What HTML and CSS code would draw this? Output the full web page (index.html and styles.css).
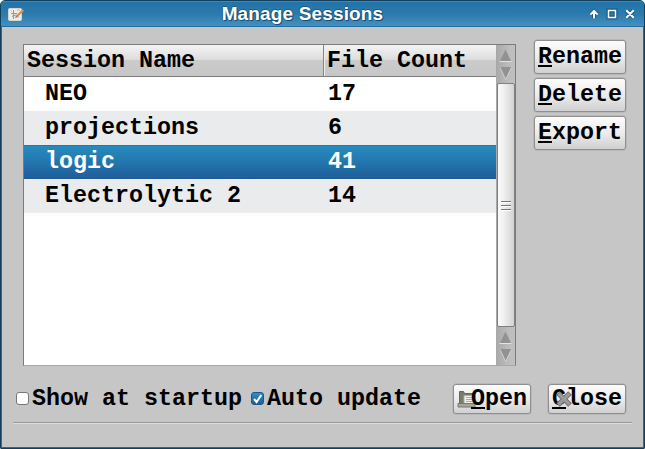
FILE: index.html
```html
<!DOCTYPE html>
<html lang="en">
<head>
<meta charset="utf-8">
<title>Manage Sessions</title>
<link rel="stylesheet" href="styles.css">
</head>
<body>
<div class="window">
  <header class="titlebar">
    <svg class="app-icon" width="18" height="16" viewBox="0 0 18 16">
      <rect x=".5" y="1.500" width="13" height="12" rx="1" fill="#ecece8" stroke="#d4d4cc"/>
      <path d="M5.500 3v9M3 6.500h6M4 9.500q4-3 7 1" fill="none" stroke="#8fa08f" stroke-width="1"/>
      <path d="M9 3h3M3 4h1" stroke="#b9b9b9"/>
      <path d="M8.500 9.500L15.300 3" stroke="#e98b35" stroke-width="2.400"/>
      <path d="M7 11l1-2 1.500 1z" fill="#6a5a4a"/>
    </svg>
    <h1 class="title">Manage Sessions</h1>
    <svg class="controls" width="50" height="14" viewBox="0 0 50 14">
      <g fill="none" stroke="#0f4468" stroke-opacity=".55" stroke-width="4">
        <path d="M6 11V4M2.500 7.500L6 4l3.500 3.500M20.500 3.500h7v7h-7zM38.500 3.500l7 7M45.500 3.500l-7 7"/>
      </g>
      <g fill="none" stroke="#fff" stroke-width="2">
        <path d="M6 11.300V4M2.400 7.600L6 4l3.600 3.600M38.300 3.300l7.400 7.400M45.700 3.300l-7.400 7.400"/>
        <path d="M20.500 3.500h7v7h-7z" stroke-width="1.500"/>
      </g>
    </svg>
  </header>
  <main class="content">
    <section class="top">
      <div class="tree">
        <div class="table">
          <div class="head"><span class="name">Session Name</span><span class="count">File Count</span></div>
          <div class="row"><span class="name">NEO</span><span class="count">17</span></div>
          <div class="row alt"><span class="name">projections</span><span class="count">6</span></div>
          <div class="row selected"><span class="name">logic</span><span class="count">41</span></div>
          <div class="row alt"><span class="name">Electrolytic 2</span><span class="count">14</span></div>
        </div>
        <div class="scrollbar">
          <svg class="steppers" width="19" height="38" viewBox="0 0 19 38">
            <path d="M4 16L9.500 4.500 15 16z" fill="#929292"/><path d="M3.500 16.500h12" stroke="#e4e4e4"/>
            <path d="M4 22h11.500L9.700 34z" fill="#929292"/><path d="M4 22.500l5.700 12 5.700-12" fill="none" stroke="#dedede" stroke-width=".7"/>
          </svg>
          <div class="thumb"><i></i><i></i><i></i></div>
          <svg class="steppers" width="19" height="38" viewBox="0 0 19 38">
            <path d="M4 16L9.500 4.500 15 16z" fill="#929292"/><path d="M3.500 16.500h12" stroke="#e4e4e4"/>
            <path d="M4 22h11.500L9.700 34z" fill="#929292"/><path d="M4 22.500l5.700 12 5.700-12" fill="none" stroke="#dedede" stroke-width=".7"/>
          </svg>
        </div>
      </div>
      <div class="actions">
        <button class="btn"><span class="key">R</span>ename</button>
        <button class="btn"><span class="key">D</span>elete</button>
        <button class="btn"><span class="key">E</span>xport</button>
      </div>
    </section>
    <section class="bottom">
      <span class="check"></span><span class="label first">Show at startup</span>
      <span class="check on"><svg width="11" height="11" viewBox="0 0 11 11"><path d="M2 6l2.500 3L9.300 2" fill="none" stroke="#fff" stroke-width="2"/></svg></span><span class="label">Auto update</span>
      <button class="btn open">
        <svg class="icon" width="20" height="20" viewBox="0 0 20 20">
          <path d="M2.500 16V2.500h4l1 2H17V16z" fill="#7b7d6c" stroke="#66685a"/>
          <path d="M7 6.500h11v8H7z" fill="#f0f0ec" stroke="#aaa"/>
          <path d="M9 8.500h8M9 10.500h8M9 12.500h8" stroke="#aaa"/>
          <path d="M1 14.500h17v3.500H1z" fill="#a5a797" stroke="#77796a"/>
        </svg><span class="key">O</span>pen</button>
      <button class="btn close"><span class="key">C</span>lose
        <svg class="icon" width="18" height="18" viewBox="0 0 18 18">
          <path d="M3 3l12 12M15 3L3 15" stroke="#666" stroke-width="5"/>
          <path d="M3.500 3.500l11 11M14.500 3.500l-11 11" stroke="#9a9a9a" stroke-width="3.200"/>
        </svg></button>
    </section>
    <hr class="rule">
  </main>
</div>
</body>
</html>
```
FILE: styles.css
```css
* { box-sizing: border-box; }
body { margin: 0; background: #fff; }
.window {
  width: 645px; height: 449px;
  display: flex; flex-direction: column;
  background: #c6c6c6;
  border: 1px solid #123f5e;
  border-radius: 5px 5px 1px 1px;
  box-shadow: inset 0 0 0 1px #1c6ea6;
  overflow: hidden;
  font: bold 23.333px/34px "Liberation Mono", monospace;
  color: #000;
}
.titlebar {
  height: 26px; flex: none;
  display: flex; align-items: center;
  padding: 0 6px 0 7px;
  background: linear-gradient(#2273a8, #2b7bad 50%, #468fbe);
  border-bottom: 1px solid #1c6ea6;
  border-top: 1px solid #3b89ba;
}
.app-icon { flex: none; margin-top: 2px; }
.title {
  flex: 1; margin: 0; padding-right: 9px;
  text-align: center; white-space: nowrap;
  font: bold 19px/24px "Liberation Sans", Arial, sans-serif;
  letter-spacing: .15px;
  color: #fff;
  text-shadow: 1px 1px 0 #184d73, -1px 0 0 #1c5d8a, 0 -1px 0 #1c5d8a, 1px 0 0 #1c5d8a;
}
.controls { flex: none; }
.content { flex: 1; padding: 13px 18px 0 12px; }
.top { display: flex; justify-content: space-between; height: 344px; padding-left: 10px; }
.tree {
  width: 493px; height: 322px; margin-top: 4px;
  display: flex;
  background: #fff;
  border: 1px solid #7c7c7c; border-bottom-color: #a8a8a8;
}
.table { flex: 1; }
.head, .row { display: flex; }
.head {
  height: 32px; line-height: 33px;
  background: linear-gradient(#f4f4f4, #dcdcdc 49%, #cbcbcb 50%, #c6c6c6);
  border-bottom: 1px solid #7c7c7c;
}
.head .name { width: 300px; padding-left: 3px; border-right: 1px solid #858585; }
.head .count { flex: 1; padding-left: 2px; border-left: 1px solid #eee; }
.row { height: 34px; }
.row .name { width: 304px; padding-left: 21px; }
.alt { background: #e9ebec; }
.selected { color: #fff; background: linear-gradient(#268bbf, #2376ad 50%, #1f5b97); border-top: 1px solid #2378ab; line-height: 33px; }
.scrollbar {
  width: 19px;
  display: flex; flex-direction: column;
  background: linear-gradient(90deg, #a8a8a8, #bdbdbd 70%, #c0c0c0);
}
.steppers { flex: none; }
.thumb {
  flex: 1; margin-left: 1px; padding-top: 1px;
  display: flex; flex-direction: column; align-items: center; justify-content: center; gap: 2px;
  border: 1px solid #808080; border-radius: 2px;
  background: linear-gradient(90deg, #fafafa, #f0f0f0 35%, #d2d2d2);
}
.thumb i { width: 10px; height: 2px; border-top: 1px solid #777; border-bottom: 1px solid #fff; }
.actions { display: flex; flex-direction: column; gap: 4px; }
.btn {
  position: relative;
  height: 34px; width: 92px; padding: 0 0 0 3px;
  font: inherit; line-height: 32px; text-align: left; color: #000;
  white-space: nowrap;
  background: linear-gradient(#fcfcfc, #ececec 50%, #d0d0d0);
  border: 1px solid #8f8f8f; border-radius: 3px;
  box-shadow: 0 0 0 .5px #aaa;
}
.key {
  text-decoration: underline 2px;
  text-underline-offset: 2px;
  text-decoration-skip-ink: none;
}
.bottom { display: flex; align-items: center; height: 30px; padding-left: 3px; }
.check {
  width: 13px; height: 13px; flex: none; margin-bottom: 2px;
  background: #fff; border: 1px solid #777; border-radius: 3px;
}
.check.on { background: linear-gradient(#2b8fc4, #1f5f9b); border-color: #1d5788; }
.check svg { display: block; }
.label { padding-left: 3px; line-height: 30px; white-space: nowrap; }
.label.first { width: 222px; }
.bottom .btn { height: 30px; line-height: 28px; }
.open { width: 78px; margin-left: auto; padding-left: 17px; }
.close { width: 78px; margin-left: 17px; }
.icon { position: absolute; left: 3px; top: 4px; }
.open .key { position: relative; }
.close .icon { left: 6px; top: 5px; }
.rule { margin: 8px -6px 0 0; height: 2px; border: 0; border-top: 1px solid #9a9a9a; border-bottom: 1px solid #dedede; }
```
